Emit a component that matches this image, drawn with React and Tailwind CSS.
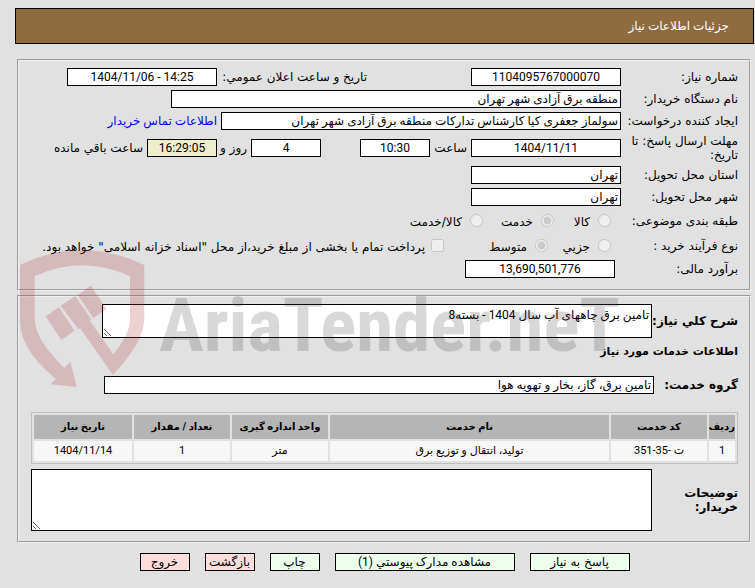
const inputBase =
  "h-[18px] border border-black px-0.5 font-['Roboto','DejaVu_Sans',sans-serif] text-[12px] leading-4 outline-none"

function Field({ id, value, className = '' }) {
  return (
    <input
      id={id}
      type="text"
      readOnly
      defaultValue={value}
      className={`${inputBase} ${className}`}
    />
  )
}

function Label({ htmlFor, className = 'w-[117px]', children }) {
  return (
    <label htmlFor={htmlFor} className={`shrink-0 ${className}`}>
      {children}
    </label>
  )
}

function Choice({ type = 'radio', name, checked = false, className = '', children }) {
  return (
    <label className={`flex shrink-0 items-center whitespace-nowrap ${className}`}>
      <input type={type} name={name} disabled defaultChecked={checked} className="size-[13px] shrink-0" />
      <span className="pt-0.5">{children}</span>
    </label>
  )
}

// Site logo laid faintly over the form
function Watermark() {
  return (
    <svg
      aria-hidden="true"
      direction="ltr"
      viewBox="0 0 620 145"
      className="pointer-events-none absolute left-[10px] top-[245px] h-[145px] w-[620px]"
    >
      <g transform="scale(0.3333)" fill="#b13237" fillOpacity="0.23">
        <path d="M30 60 Q215 -30 403 60 V222 C400 280 360 335 309 390 L211 250 L205 252 L152 182 L196 153 L243 222 L240 228 L310 328 C345 285 360 250 360 225 V93 Q215 28 74 93 V215 C74 270 110 315 163 369 L181 350 L200 426 L122 418 L137 402 C80 350 30 300 30 222 Z" />
        <path d="M107 214 L147 187 L193 257 L154 285 Z" />
        <path d="M203 150 L243 122 L289 192 L250 220 Z" />
      </g>
      <text
        x="149"
        y="106"
        className="fill-[#3c3c3c]/20 font-['Roboto_Condensed','Roboto',sans-serif] text-[75px] font-bold"
      >
        AriaTender.neT
      </text>
    </svg>
  )
}

const rows = [
  { id: '1', code: 'ت -35-351', name: 'تولید، انتقال و توزیع برق', unit: 'متر', count: '1', date: '1404/11/14' },
]

export default function App() {
  return (
    <div
      dir="rtl"
      className="relative min-h-screen bg-[#e1e1e1] pb-4 pl-[15px] pr-px pt-2 font-['DejaVu_Sans',sans-serif] text-[12px] leading-[14px] text-black"
    >
      <header className="flex h-9 items-center border border-black bg-[#8f6c3f] px-6 font-['Roboto','DejaVu_Sans',sans-serif] text-white">
        <h1>جزئیات اطلاعات نیاز</h1>
      </header>

      <fieldset className="ml-0.5 mr-[3px] mt-[15px] flex flex-col gap-1 border-2 border-[#f0f0f0] px-[11px] pb-[11px] pt-[7px] [border-style:groove]">
        <div className="flex items-center">
          <Label htmlFor="number">شماره نیاز:</Label>
          <Field id="number" value="1104095767000070" className="w-[150px] bg-white text-center" />
          <Label htmlFor="announced" className="ms-[104px] w-[150px] whitespace-nowrap">تاریخ و ساعت اعلان عمومي:</Label>
          <Field id="announced" value="1404/11/06 - 14:25" className="w-[150px] bg-white text-center [direction:ltr]" />
        </div>

        <div className="flex items-center">
          <Label htmlFor="buyer">نام دستگاه خریدار:</Label>
          <Field id="buyer" value="منطقه برق آزادی شهر تهران" className="w-[450px] bg-white" />
        </div>

        <div className="flex items-center">
          <Label htmlFor="creator">ایجاد کننده درخواست:</Label>
          <Field
            id="creator"
            value="سولماز جعفری کیا کارشناس تدارکات منطقه برق آزادی شهر تهران"
            className="w-[400px] bg-white"
          />
          <a href="#contact" className="ps-1 font-['Roboto','DejaVu_Sans',sans-serif] text-[#0000ee]">
            اطلاعات تماس خریدار
          </a>
        </div>

        <div className="flex items-center">
          <Label htmlFor="deadline">مهلت ارسال پاسخ: تا<br />تاریخ:</Label>
          <Field id="deadline" value="1404/11/11" className="w-[150px] bg-white text-center" />
          <Label htmlFor="hour" className="w-[41px] ps-1">ساعت</Label>
          <Field id="hour" value="10:30" className="w-[70px] bg-white text-center" />
          <Field id="days" value="4" className="ms-[39px] w-[70px] bg-white text-center" />
          <Label htmlFor="days" className="w-[34px] whitespace-nowrap ps-1">روز و</Label>
          <Field id="left" value="16:29:05" className="w-[70px] bg-[#eeeecc] text-center" />
          <Label htmlFor="left" className="ps-1">ساعت باقي مانده</Label>
        </div>

        <div className="flex items-center">
          <Label htmlFor="province">استان محل تحویل:</Label>
          <Field id="province" value="تهران" className="w-[150px] bg-white" />
        </div>

        <div className="flex items-center">
          <Label htmlFor="city">شهر محل تحویل:</Label>
          <Field id="city" value="تهران" className="w-[150px] bg-white" />
        </div>

        <div className="flex h-[21px] items-center">
          <span className="w-[127px] shrink-0">طبقه بندی موضوعی:</span>
          <Choice name="category" className="w-[57px] gap-2">کالا</Choice>
          <Choice name="category" checked className="w-[71px] gap-2">خدمت</Choice>
          <Choice name="category" className="gap-2">کالا/خدمت</Choice>
        </div>

        <div className="flex h-[21px] items-center">
          <span className="w-[127px] shrink-0">نوع فرآیند خرید :</span>
          <Choice name="process" className="w-[63px] gap-2">جزیي</Choice>
          <Choice name="process" checked className="w-[104px] gap-2">متوسط</Choice>
          <Choice type="checkbox" name="treasury" className="gap-1.5">
            پرداخت تمام یا بخشی از مبلغ خرید،از محل "اسناد خزانه اسلامی" خواهد بود.
          </Choice>
        </div>

        <div className="flex items-center">
          <Label htmlFor="estimate" className="w-[123px]">برآورد مالی:</Label>
          <Field id="estimate" value="13,690,501,776" className="w-[150px] bg-white text-center" />
        </div>
      </fieldset>

      <fieldset className="ml-0.5 mr-[3px] mt-1 border-2 border-[#f0f0f0] pb-2.5 pl-3 pr-[11px] pt-[7px] [border-style:groove]">
        <div className="flex items-center pl-[71px]">
          <Label htmlFor="summary" className="w-[86px] whitespace-nowrap font-bold">شرح کلي نیاز:</Label>
          <textarea
            id="summary"
            readOnly
            defaultValue="تامین برق چاههای آب سال 1404 - بسته8"
            className="block h-[34px] flex-1 resize border border-black bg-white p-0.5 font-['Roboto','DejaVu_Sans',sans-serif] leading-4 outline-none"
          />
        </div>

        <h2 className="mt-[7px] text-[11px] font-bold">اطلاعات خدمات مورد نیاز</h2>

        <div className="mt-[17px] flex items-center pl-[73px]">
          <Label htmlFor="group" className="w-[84px] font-bold">گروه خدمت:</Label>
          <Field id="group" value="تامین برق، گاز، بخار و تهویه هوا" className="flex-1 bg-white" />
        </div>

        <table className="mt-[18px] w-full table-fixed border-separate border-spacing-0.5 border border-[#c0c0c0] text-center font-['Roboto','DejaVu_Sans',sans-serif] text-[11px]">
          <thead>
            <tr className="h-6 bg-[#b5b5b5] text-[10px]">
              <th className="w-[26px] p-0">ردیف</th>
              <th className="w-24 p-0">کد خدمت</th>
              <th className="p-0">نام خدمت</th>
              <th className="w-24 p-0">واحد اندازه گیری</th>
              <th className="w-24 p-0">تعداد / مقدار</th>
              <th className="w-[98px] p-0">تاریخ نیاز</th>
            </tr>
          </thead>
          <tbody>
            {rows.map(row => (
              <tr key={row.id} className="h-5 bg-[#f7f7f7]">
                <td className="p-0">{row.id}</td>
                <td className="p-0">{row.code}</td>
                <td className="p-0">{row.name}</td>
                <td className="p-0">{row.unit}</td>
                <td className="p-0">{row.count}</td>
                <td className="p-0">{row.date}</td>
              </tr>
            ))}
          </tbody>
        </table>

        <div className="mt-[5px] flex items-center">
          <Label htmlFor="notes" className="w-[86px] font-bold">توضیحات<br />خریدار:</Label>
          <textarea
            id="notes"
            readOnly
            className="block h-[62px] flex-1 resize border border-black bg-white p-0.5 outline-none"
          />
        </div>
      </fieldset>

      <div className="mt-2.5 flex justify-center gap-[15px]">
        <button type="button" className="h-[18px] w-[100px] border border-black bg-[#eeffee]">پاسخ به نیاز</button>
        <button type="button" className="h-[18px] w-[180px] border border-black bg-[#eeffee] font-['Roboto','DejaVu_Sans',sans-serif]">
          مشاهده مدارک پیوستي (1)
        </button>
        <button type="button" className="h-[18px] w-[50px] border border-black bg-[#eeffee]">چاپ</button>
        <button type="button" className="h-[18px] w-[50px] border border-black bg-[#ffdddd]">بازگشت</button>
        <button type="button" className="h-[18px] w-[50px] border border-black bg-[#ffdddd]">خروج</button>
      </div>

      <Watermark />
    </div>
  )
}
